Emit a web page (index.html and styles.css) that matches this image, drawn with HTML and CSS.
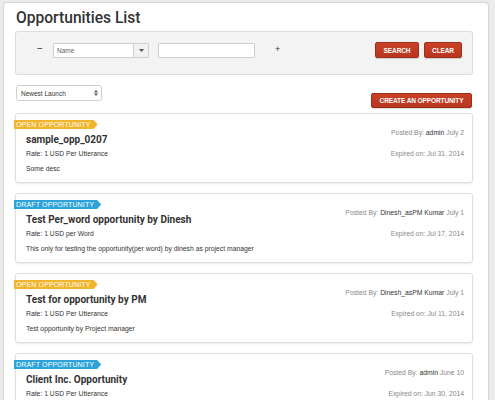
FILE: index.html
```html
<!DOCTYPE html>
<html>
<head>
<meta charset="utf-8">
<link rel="stylesheet" href="styles.css">
</head>
<body>
<div class="panel">
  <h1 class="page-title">Opportunities List</h1>
  <div class="search-box">
    <span class="op">&minus;</span>
    <div class="fake-select">
      <span class="fs-text">Name</span>
      <span class="fs-btn"><svg width="5" height="3" viewBox="0 0 5 3"><path d="M0 0h5L2.5 3z" fill="#555"/></svg></span>
    </div>
    <div class="text-input"></div>
    <span class="op plus">+</span>
    <div class="spacer"></div>
    <button class="btn">SEARCH</button>
    <button class="btn">CLEAR</button>
  </div>
  <div class="toolbar">
    <div class="sort-select">
      <span>Newest Launch</span>
      <svg width="4" height="6" viewBox="0 0 4 6"><path d="M0 2.4L2 0l2 2.4zM0 3.6L2 6l2-2.4z" fill="#555"/></svg>
    </div>
    <button class="btn btn-create">CREATE AN OPPORTUNITY</button>
  </div>

  <div class="card">
    <div class="card-left">
      <div class="badge open">OPEN OPPORTUNITY</div>
      <div class="card-title">sample_opp_0207</div>
      <div class="rate">Rate: 1 USD Per Utterance</div>
      <div class="desc">Some desc</div>
    </div>
    <div class="card-right">
      <div class="posted">Posted By: <span class="who">admin</span> July 2</div>
      <div class="expired">Expired on: Jul 31, 2014</div>
    </div>
  </div>

  <div class="card">
    <div class="card-left">
      <div class="badge draft">DRAFT OPPORTUNITY</div>
      <div class="card-title">Test Per_word opportunity by Dinesh</div>
      <div class="rate">Rate: 1 USD per Word</div>
      <div class="desc">This only for testing the opportunity(per word) by dinesh as project manager</div>
    </div>
    <div class="card-right">
      <div class="posted">Posted By: <span class="who">Dinesh_asPM Kumar</span> July 1</div>
      <div class="expired">Expired on: Jul 17, 2014</div>
    </div>
  </div>

  <div class="card">
    <div class="card-left">
      <div class="badge open">OPEN OPPORTUNITY</div>
      <div class="card-title">Test for opportunity by PM</div>
      <div class="rate">Rate: 1 USD Per Utterance</div>
      <div class="desc">Test opportunity by Project manager</div>
    </div>
    <div class="card-right">
      <div class="posted">Posted By: <span class="who">Dinesh_asPM Kumar</span> July 1</div>
      <div class="expired">Expired on: Jul 11, 2014</div>
    </div>
  </div>

  <div class="card">
    <div class="card-left">
      <div class="badge draft">DRAFT OPPORTUNITY</div>
      <div class="card-title">Client Inc. Opportunity</div>
      <div class="rate">Rate: 1 USD Per Utterance</div>
      <div class="desc">Client opportunity</div>
    </div>
    <div class="card-right">
      <div class="posted">Posted By: <span class="who">admin</span> June 10</div>
      <div class="expired">Expired on: Jun 30, 2014</div>
    </div>
  </div>
</div>
</body>
</html>
```

FILE: styles.css
```css
* { box-sizing: border-box; }
html, body { margin: 0; padding: 0; }
body {
  background: #ececec;
  font-family: "Liberation Sans", Arial, sans-serif;
  color: #333;
  padding: 2px 0 0 3px;
}
.panel {
  width: 486px;
  background: #fff;
  border: 1px solid #d6d6d6;
  border-radius: 4px;
  box-shadow: 0 0 2px rgba(0,0,0,0.08);
  padding: 0 15px 20px 11px;
  min-height: 420px;
}
.page-title {
  font-family: Roboto, "Liberation Sans", sans-serif;
  font-weight: 500;
  font-size: 15.6px;
  line-height: 20px;
  margin: 0;
  padding: 5px 0 3px 1px;
  color: #333;
}
.search-box {
  display: flex;
  align-items: center;
  height: 44px;
  background: #f3f3f3;
  border: 1px solid #dcdcdc;
  border-radius: 3px;
  padding: 0 10px 6px 21px;
}
.op {
  font-size: 10px;
  line-height: 10px;
  color: #333;
  width: 16px;
  margin-top: -3px;
}
.plus { margin-left: 20px; font-size: 9px; }
.fake-select {
  display: flex;
  width: 96px;
  height: 15px;
  background: #fff;
  border: 1px solid #cfcfcf;
  border-radius: 1px;
}
.fs-text {
  flex: 1;
  font-size: 6.5px;
  line-height: 13px;
  color: #666;
  padding-left: 3px;
}
.fs-btn {
  width: 15px;
  border-left: 1px solid #cfcfcf;
  background: #f1f1f1;
  display: flex;
  align-items: center;
  justify-content: center;
}
.text-input {
  width: 97px;
  height: 15px;
  margin-left: 9px;
  background: #fff;
  border: 1px solid #cfcfcf;
  border-radius: 1px;
}
.spacer { flex: 1; }
.btn {
  font-family: "Liberation Sans", Arial, sans-serif;
  font-weight: bold;
  font-size: 6.5px;
  color: #fff;
  background: linear-gradient(#c84128, #b8361f);
  border: 1px solid #a02d18;
  border-radius: 2px;
  height: 16px;
  padding: 0 6px;
  box-shadow: 0 1px 1px rgba(0,0,0,0.15);
  margin-left: 5px;
  letter-spacing: -0.1px;
}
.search-box .btn:first-of-type { width: 44px; }
.search-box .btn:last-of-type { width: 38px; }
.toolbar {
  display: flex;
  justify-content: space-between;
  align-items: flex-start;
  padding: 10px 1px 5px 1px;
}
.sort-select {
  display: flex;
  align-items: center;
  justify-content: space-between;
  width: 86px;
  height: 16px;
  border: 1px solid #cfcfcf;
  border-radius: 3px;
  background: #fff;
  padding: 0 3px 0 4px;
  font-size: 6.5px;
  color: #333;
}
.btn-create {
  margin-top: 8px;
  width: 101px;
  height: 15px;
  padding: 0;
}
.card {
  display: flex;
  justify-content: space-between;
  border: 1px solid #dedede;
  border-radius: 3px;
  box-shadow: 0 1px 2px rgba(0,0,0,0.08);
  padding: 6px 8px 0 0;
  margin-bottom: 10px;
  height: 70px;
}
.card-left { min-width: 0; }
.badge {
  display: block;
  width: fit-content;
  margin-left: -2px;
  height: 9px;
  line-height: 9px;
  font-size: 7px;
  color: #fff;
  padding: 0 7px 0 2px;
  letter-spacing: 0.15px;
  clip-path: polygon(0 0, calc(100% - 4px) 0, 100% 50%, calc(100% - 4px) 100%, 0 100%);
}
.badge.open { background: #f2b42a; }
.badge.draft { background: #2ca4da; }
.card-title {
  font-family: Roboto, "Liberation Sans", sans-serif;
  font-weight: 700;
  font-size: 10px;
  line-height: 14px;
  margin-top: 4px;
  padding-left: 10px;
  color: #333;
}
.rate, .desc {
  font-size: 6.8px;
  line-height: 10px;
  padding-left: 10px;
  color: #333;
  white-space: nowrap;
}
.rate { margin-top: 2px; }
.desc { margin-top: 5px; }
.card-right {
  text-align: right;
  padding-top: 8px;
  font-size: 6.8px;
  line-height: 10px;
  color: #888;
  white-space: nowrap;
}
.who { color: #333; font-weight: 500; }
.expired { margin-top: 11px; }
```
